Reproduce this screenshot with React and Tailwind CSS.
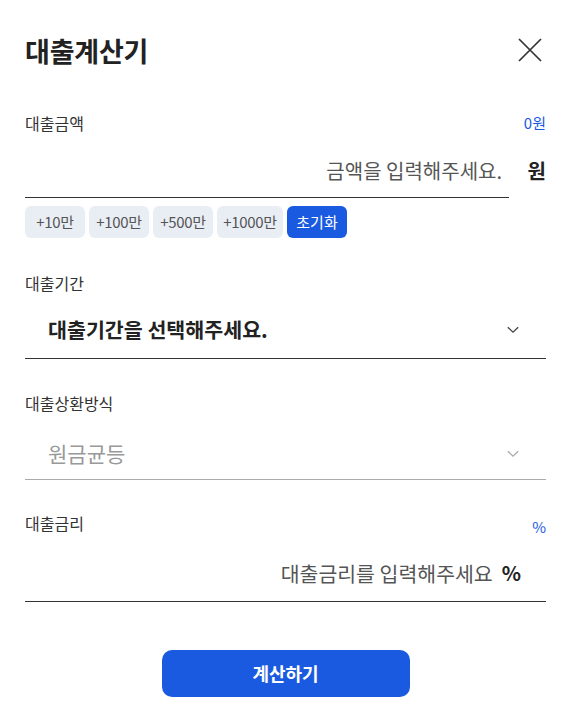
import React from "react";

const Chevron = ({ color }) => (
  <svg width="12" height="8" viewBox="0 0 12 8" fill="none">
    <path d="M0.8 1.2 L6 6.2 L11.2 1.2" stroke={color} strokeWidth="1.3" />
  </svg>
);

export default function App() {
  const font = { fontFamily: '"Noto Sans CJK KR", "Noto Sans", sans-serif' };
  return (
    <div className="w-[571px] h-[724px] bg-white px-[25px] text-[#222]" style={font}>
      <div className="h-[100px] flex items-center justify-between">
        <h1 className="text-[27px] font-bold leading-none tracking-[-0.2px] text-[#222]">대출계산기</h1>
        <svg width="26" height="26" viewBox="0 0 26 26" className="mr-[3px]">
          <path d="M2 2 L24 24 M24 2 L2 24" stroke="#333" strokeWidth="1.7" />
        </svg>
      </div>

      {/* 대출금액 */}
      <div className="mt-[13px] h-[20px] flex items-center justify-between">
        <span className="text-[16px] text-[#333]">대출금액</span>
        <span className="text-[15px] text-[#1a5ae0]">0원</span>
      </div>
      <div className="flex items-end">
        <div className="w-[484px] h-[65px] border-b border-[#333] flex items-end justify-end pb-[12px] pr-[7px]">
          <span className="text-[20px] leading-[28px] text-[#555]">금액을 입력해주세요.</span>
        </div>
        <span className="flex-1 text-right text-[20px] leading-[28px] font-bold text-[#222] mb-[13px]">원</span>
      </div>
      <div className="mt-[8px] flex gap-[4px]">
        {[
          ["+10만", "w-[60px]"],
          ["+100만", "w-[60px]"],
          ["+500만", "w-[60px]"],
          ["+1000만", "w-[66px]"],
        ].map(([t, w]) => (
          <button key={t} className={`${w} h-[32px] rounded-[6px] bg-[#e9eef5] text-[15px] tracking-[-0.3px] text-[#555]`}>
            {t}
          </button>
        ))}
        <button className="w-[60px] h-[32px] rounded-[6px] bg-[#1a5ae0] text-[15px] text-white">초기화</button>
      </div>

      {/* 대출기간 */}
      <div className="mt-[35px] h-[20px] flex items-center">
        <span className="text-[16px] text-[#333]">대출기간</span>
      </div>
      <div className="h-[66px] border-b border-[#333] flex items-end justify-between pb-[15px] pl-[23px] pr-[27px]">
        <span className="text-[20.6px] leading-[28px] font-bold text-[#222]">대출기간을 선택해주세요.</span>
        <span className="mb-[9px]"><Chevron color="#444" /></span>
      </div>

      {/* 대출상환방식 */}
      <div className="mt-[34px] h-[20px] flex items-center">
        <span className="text-[16px] text-[#333]">대출상환방식</span>
      </div>
      <div className="h-[67px] border-b border-[#aaa] flex items-end justify-between pb-[12px] pl-[23px] pr-[27px]">
        <span className="text-[21px] leading-[28px] text-[#999]">원금균등</span>
        <span className="mb-[9px]"><Chevron color="#aaa" /></span>
      </div>

      {/* 대출금리 */}
      <div className="mt-[33px] h-[20px] flex items-center justify-between">
        <span className="text-[16px] text-[#333]">대출금리</span>
        <span className="text-[15px] text-[#1a5ae0] mt-[8px]">%</span>
      </div>
      <div className="h-[69px] border-b border-[#333] flex items-end justify-end pb-[14px] pr-[25px] gap-[9px]">
        <span className="text-[20.5px] leading-[28px] text-[#555]">대출금리를 입력해주세요</span>
        <span className="text-[20px] leading-[28px] font-bold text-[#222]">%</span>
      </div>

      <div className="mt-[48px] flex justify-center">
        <button className="w-[248px] h-[47px] rounded-[10px] bg-[#1a5ae0] text-white text-[18px] font-bold">계산하기</button>
      </div>
    </div>
  );
}
